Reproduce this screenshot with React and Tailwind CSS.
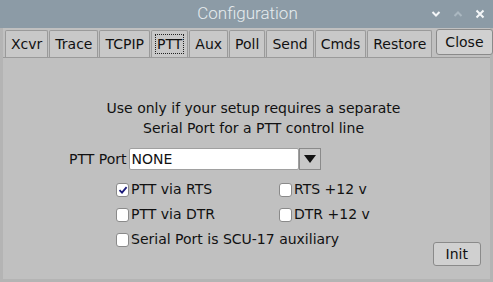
import React, { useState } from 'react';

const tabs = ['Xcvr', 'Trace', 'TCPIP', 'PTT', 'Aux', 'Poll', 'Send', 'Cmds', 'Restore'];

const CheckBox = ({ checked, label, onChange }) => (
  <label className="flex items-center gap-[2px] cursor-default">
    <span className="w-[13px] h-[14px] rounded-[3px] border border-[#8a8a8a] bg-white flex items-center justify-center" onClick={onChange}>
      {checked && (
        <svg width="10" height="10" viewBox="0 0 10 10">
          <path d="M1.5 5.2 L4 7.6 L8.6 2.2" stroke="#1a1a7a" strokeWidth="1.8" fill="none" />
        </svg>
      )}
    </span>
    <span>{label}</span>
  </label>
);

const App = () => {
  const [active, setActive] = useState('PTT');
  const [opts, setOpts] = useState({ rts: true, dtr: false, rts12: false, dtr12: false, scu: false });
  const toggle = (k) => setOpts(prev => ({ ...prev, [k]: !prev[k] }));

  return (
    <div className="w-[493px] h-[282px] bg-[#c0c0c0] flex flex-col text-[14px] text-[#111] font-['DejaVu_Sans',sans-serif] overflow-hidden">
      {/* Title bar */}
      <div className="h-[28px] bg-[#8c9ba6] flex items-center relative shrink-0">
        <div className="flex-1 text-center text-[#e6ecef] text-[17px] font-light font-['Roboto',sans-serif] pl-[2px]">Configuration</div>
        <div className="absolute right-[8px] top-0 h-full flex items-center gap-[12px] text-[#f4f6f8]">
          <svg width="10" height="10" viewBox="0 0 10 10"><path d="M1.5 3 L5 6.5 L8.5 3" stroke="currentColor" strokeWidth="2" fill="none" /></svg>
          <svg width="10" height="10" viewBox="0 0 10 10"><path d="M1.5 7 L5 3.5 L8.5 7" stroke="#aab7c0" strokeWidth="2" fill="none" /></svg>
          <svg width="10" height="10" viewBox="0 0 10 10"><path d="M1.5 1.5 L8.5 8.5 M8.5 1.5 L1.5 8.5" stroke="currentColor" strokeWidth="2" fill="none" /></svg>
        </div>
      </div>

      {/* Window body */}
      <div className="flex-1 flex flex-col border-l-[3px] border-r-[3px] border-b-[3px] border-[#b4b4b4]">
        {/* Tab row */}
        <div className="flex items-end h-[29px] pl-[2px] pt-[2px] gap-[1px] bg-[#c0c0c0]">
          {tabs.map(t => (
            <button
              key={t}
              onClick={() => setActive(t)}
              className="h-[27px] px-[4px] bg-[#c8c8c8] border border-[#9a9a9a] border-b-0 rounded-t-[2px] flex items-center"
            >
              <span className={t === active ? 'outline outline-1 outline-dotted outline-[#222] px-[1px] leading-[18px]' : 'px-[1px] leading-[18px]'}>{t}</span>
            </button>
          ))}
          <button className="ml-[3px] mb-[2px] h-[26px] px-[8px] bg-[#d0d0d0] border border-[#8a8a8a] rounded-[3px] flex items-center">Close</button>
        </div>

        {/* Panel */}
        <div className="flex-1 border-t border-[#9a9a9a] flex flex-col items-center pt-[40px] pl-[14px] relative">
          <div className="text-center leading-[20px]">
            <div>Use only if your setup requires a separate</div>
            <div>Serial Port for a PTT control line</div>
          </div>

          <div className="w-full pl-[52px] mt-[10px] flex items-center">
            <span className="mr-[2px]">PTT Port</span>
            <div className="w-[170px] h-[22px] bg-white border border-[#a0a0a0] rounded-[2px] flex items-center px-[2px]">NONE</div>
            <div className="w-[22px] h-[22px] bg-[#c8c8c8] border border-[#8a8a8a] flex items-center justify-center">
              <svg width="12" height="8" viewBox="0 0 12 8"><path d="M0 0 L12 0 L6 8 Z" fill="#111" /></svg>
            </div>
          </div>

          <div className="w-full pl-[99px] mt-[9px] grid grid-cols-[163px_auto] gap-y-[4px]">
            <CheckBox checked={opts.rts} label="PTT via RTS" onChange={() => toggle('rts')} />
            <CheckBox checked={opts.rts12} label="RTS +12 v" onChange={() => toggle('rts12')} />
            <CheckBox checked={opts.dtr} label="PTT via DTR" onChange={() => toggle('dtr')} />
            <CheckBox checked={opts.dtr12} label="DTR +12 v" onChange={() => toggle('dtr12')} />
            <div className="col-span-2">
              <CheckBox checked={opts.scu} label="Serial Port is SCU-17 auxiliary" onChange={() => toggle('scu')} />
            </div>
          </div>

          <button className="absolute right-[9px] bottom-[13px] h-[24px] px-[12px] bg-[#d0d0d0] border border-[#8a8a8a] rounded-[3px] flex items-center">Init</button>
        </div>
      </div>
    </div>
  );
};

export default App;
